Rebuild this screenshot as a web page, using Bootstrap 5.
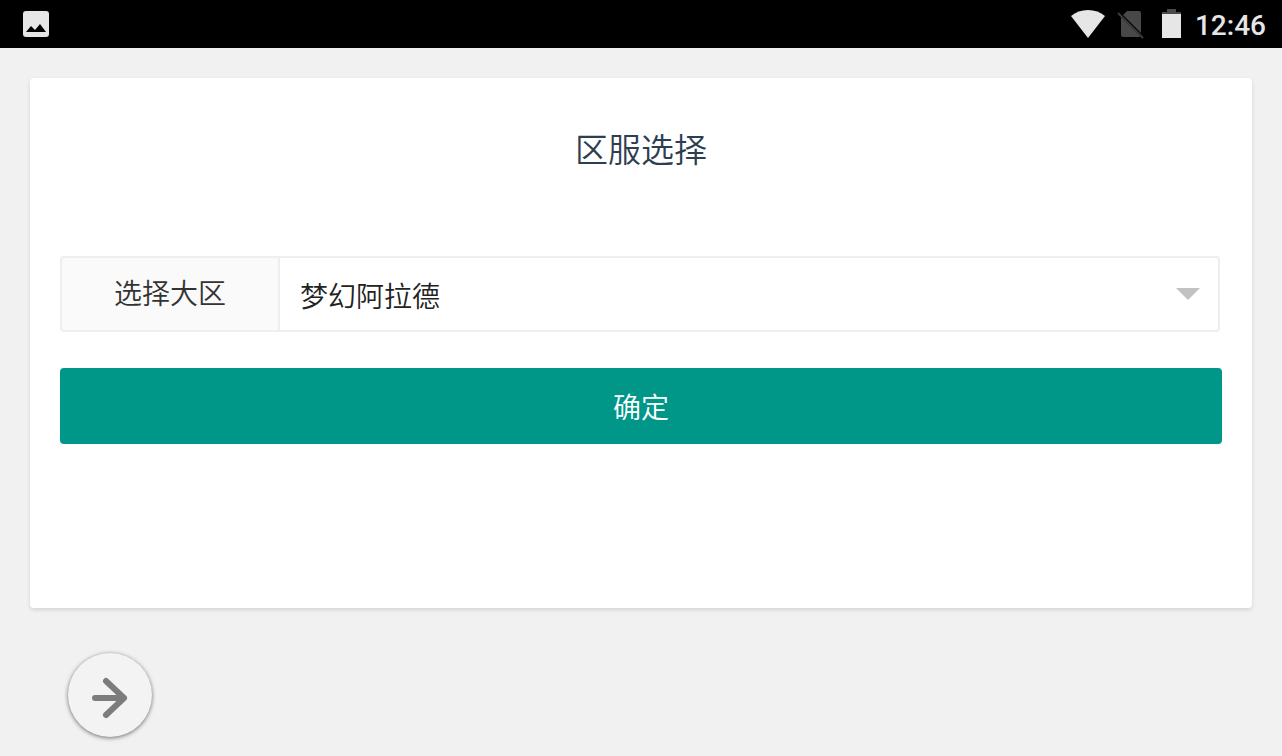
<!DOCTYPE html>
<html lang="zh-CN">
<head>
<meta charset="utf-8">
<meta name="viewport" content="width=device-width, initial-scale=1">
<title>区服选择</title>
<link href="https://cdn.jsdelivr.net/npm/bootstrap@5.3.0/dist/css/bootstrap.min.css" rel="stylesheet">
<style>
  body { background: #f1f1f1; font-family: "Noto Sans CJK SC", sans-serif; font-size: 28px; font-weight: 350; color: #333; }
  .status-bar { height: 48px; background: #000; color: #e6e6e6; padding: 0 16px 0 22px; }
  .status-bar svg { display: block; }
  .battery { margin-right: 14px; }
  .clock { font: 500 28px/44px Roboto, sans-serif; padding-top: 4px; }
  .page-body { padding: 30px 30px 0; }
  .server-card { min-height: 530px; padding: 46px 30px; border: 0; border-radius: 4px; box-shadow: 0 2px 4px rgba(0,0,0,.12); }
  .server-title { font-size: 33px; line-height: 48px; font-weight: 350; color: #2c3e50; margin-bottom: 84px; }
  .server-field { width: auto; height: 76px; margin: 0 2px 36px 0; }
  .server-field .input-group-text { width: 220px; background: #fafafa; border: 2px solid #eee; border-radius: 4px; font-size: 28px; font-weight: 350; color: #333; padding: 0 0 4px; }
  .server-field .form-select { border: 2px solid #eee; border-left: 0; border-radius: 4px; font-size: 28px; font-weight: 350; color: #222; padding: 2px 60px 0 20px;
    background-image: url("data:image/svg+xml,%3csvg xmlns='http://www.w3.org/2000/svg' viewBox='0 0 24 12'%3e%3cpath fill='%23c2c2c2' d='M0 0h24L12 12z'/%3e%3c/svg%3e");
    background-size: 24px 12px; background-position: right 18px center; }
  .confirm-btn { height: 76px; border: 0; border-radius: 4px; background: #009688; color: #fff; font-size: 28px; font-weight: 350; padding: 0; }
  .confirm-btn:hover { background: #33ab9f; color: #fff; }
  .next-btn { width: 84px; height: 84px; margin: 45px 0 18px 38px; border: 0; background: #f3f3f3; box-shadow: 0 1px 4px rgba(0,0,0,.55); }
</style>
</head>
<body>
<header class="status-bar d-flex align-items-center justify-content-between">
  <svg width="28" height="28" viewBox="0 0 28 28" aria-hidden="true"><rect x="1" y="1" width="26" height="26" rx="3" fill="#e6e6e6"/><path d="M4 22l5-6 4 4 5-6 6 8z" fill="#000"/></svg>
  <div class="d-flex align-items-center">
    <svg width="36" height="30" viewBox="0 0 36 30" aria-hidden="true"><path d="M1 7Q8 1 18 1t17 6L18 29z" fill="#e6e6e6"/></svg>
    <svg class="ms-2 me-3" width="32" height="30" viewBox="0 0 32 30" aria-hidden="true"><path d="M13 2h12q2 0 2 2v20L9 6zM7 8l19 19q0 1-1 1H9q-2 0-2-2z" fill="#484848"/><path d="M4 4l25 25" stroke="#3c3c3c" stroke-width="2"/></svg>
    <svg class="battery" width="19" height="30" viewBox="0 0 19 30" aria-hidden="true"><path d="M5 0h9v3h5v3H0V3h5z" fill="#4a4a4a"/><path d="M0 5h19v24H0z" fill="#e6e6e6"/></svg>
    <time class="clock" datetime="12:46">12:46</time>
  </div>
</header>
<main class="container-fluid page-body">
  <form class="card server-card">
    <h1 class="server-title text-center">区服选择</h1>
    <div class="input-group server-field">
      <label class="input-group-text justify-content-center" for="zone">选择大区</label>
      <select class="form-select ms-0" id="zone"><option selected>梦幻阿拉德</option></select>
    </div>
    <button type="submit" class="btn confirm-btn w-100">确定</button>
  </form>
  <button type="button" class="next-btn rounded-circle d-flex align-items-center justify-content-center p-0" aria-label="前进">
    <svg width="44" height="48" viewBox="0 0 44 48" fill="none" stroke="#7c7c7c" stroke-width="6" stroke-linecap="round" stroke-linejoin="round" aria-hidden="true"><path d="M7 27h29M18 10l18 17-18 17"/></svg>
  </button>
</main>
<script src="https://cdn.jsdelivr.net/npm/bootstrap@5.3.0/dist/js/bootstrap.bundle.min.js"></script>
</body>
</html>
